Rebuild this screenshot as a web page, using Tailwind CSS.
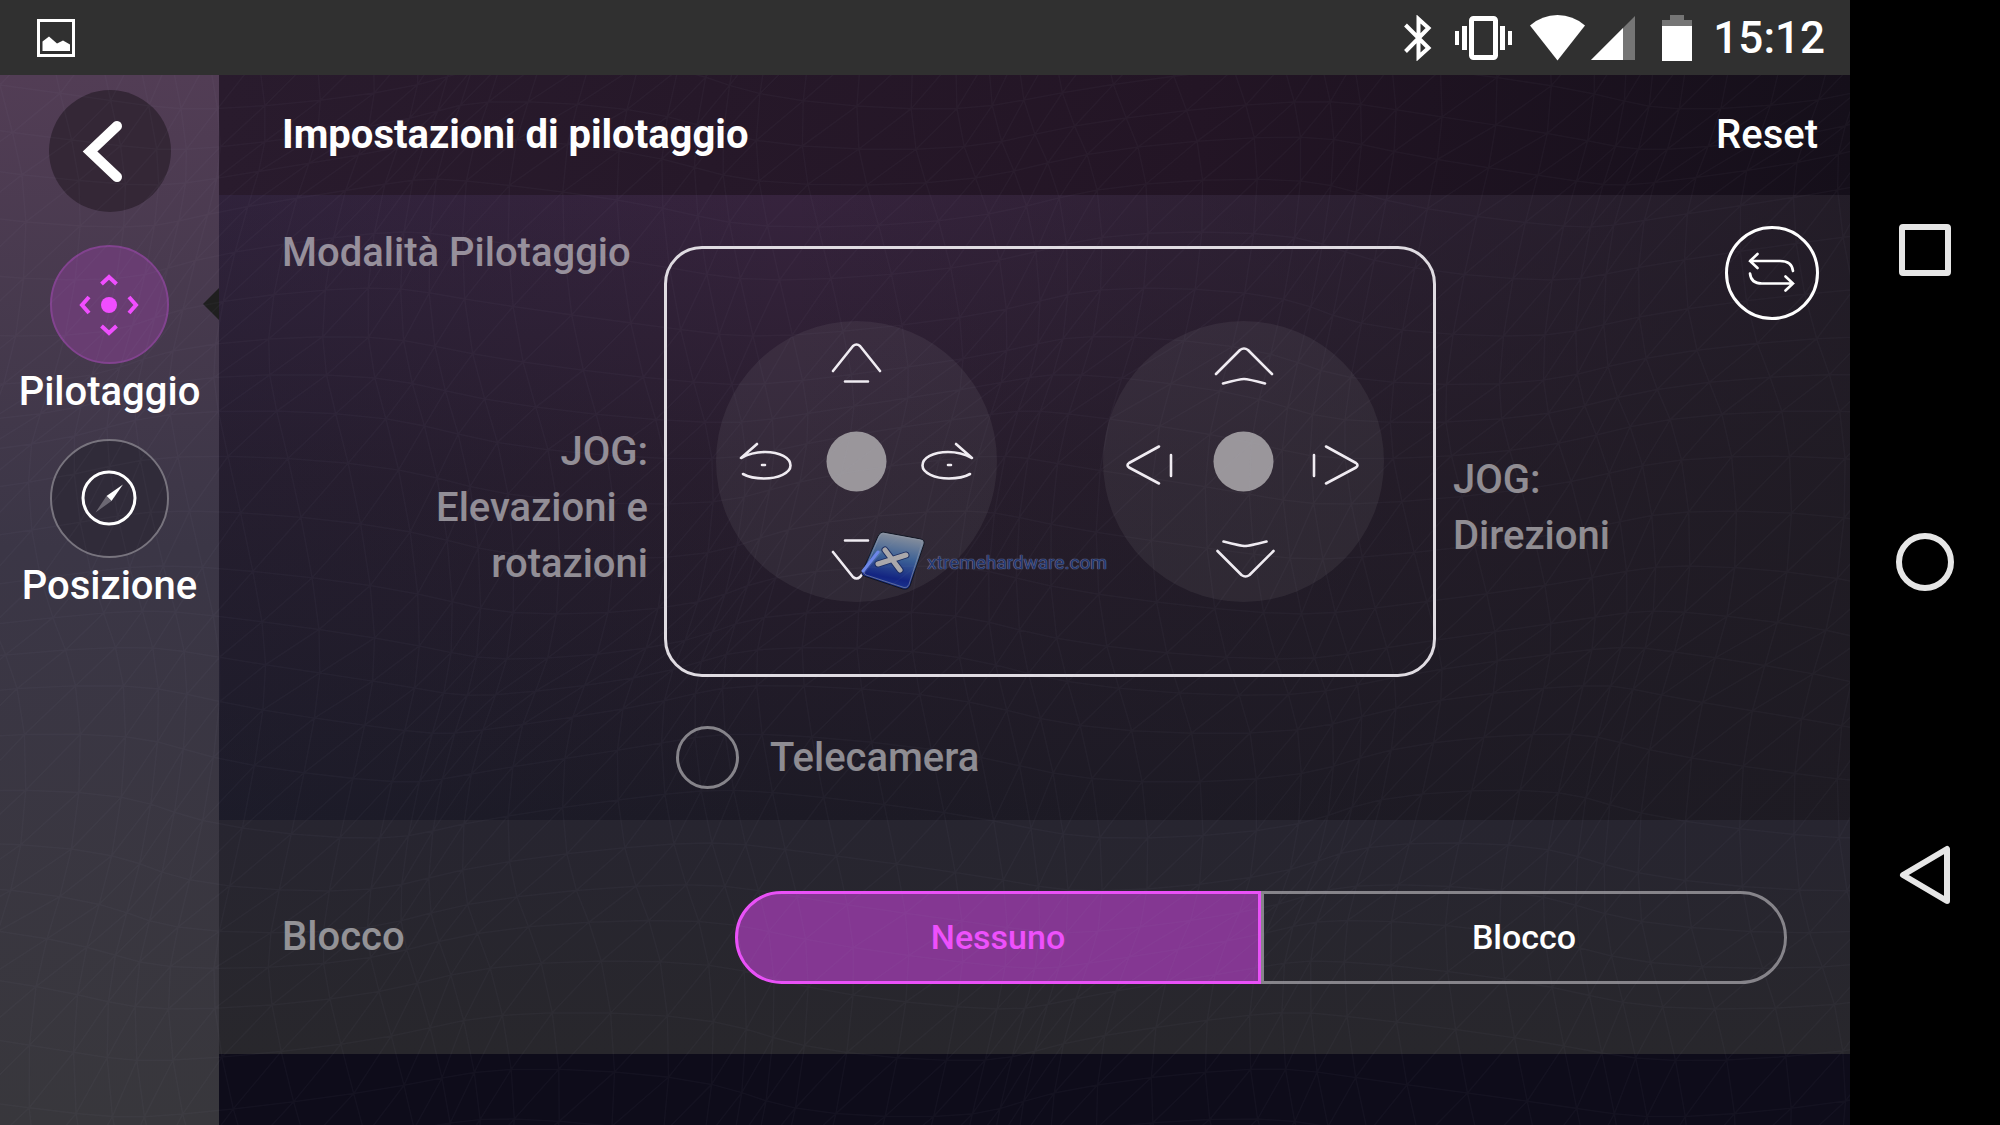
<!DOCTYPE html>
<html lang="it">
  <head>
    <meta charset="UTF-8">
    <meta name="viewport" content="width=device-width, initial-scale=1.0">
    <title>Impostazioni di pilotaggio</title>
    <script src="https://cdn.jsdelivr.net/npm/@tailwindcss/browser@4"></script>
  </head>
  <body class="min-h-screen flex bg-black text-white font-['Roboto',sans-serif] font-medium">
    <div class="flex-1 min-h-screen flex flex-col">
      <!-- Status bar -->
      <header class="h-[75px] shrink-0 bg-[#303030] flex items-center justify-between pl-[37px] pr-[25px]">
        <svg class="size-[38px]" viewBox="0 0 38 38" fill="none">
          <rect x="1.5" y="1.5" width="35" height="35" stroke="#fff" stroke-width="3"/>
          <path d="M5.500 32V22.500l6.500-5 8 7 6-3 7 4V32z" fill="#fff"/>
        </svg>
        <div class="flex items-center">
          <svg class="w-[28px] h-[46px]" viewBox="0 0 28 46" fill="none" stroke="#fff" stroke-width="4">
            <path d="M1.500 10L24.500 33 14.500 42V4l10 9L1.500 36.500"/>
          </svg>
          <svg class="ml-[23px] w-[57px] h-[46px]" viewBox="0 0 57 46" fill="#fff">
            <rect x="16.500" y="3.500" width="24" height="39" rx="2" fill="none" stroke="#fff" stroke-width="5"/>
            <path d="M0 16h4v14H0zM7 11h5v24H7zM45 11h5v24h-5zM53 16h4v14h-4z"/>
          </svg>
          <svg class="ml-[18px] w-[55px] h-[46px]" viewBox="0 0 55 46" fill="#fff">
            <path d="M27.500 45.500L0 10.500Q12 0 27.500 0T55 10.500z"/>
          </svg>
          <svg class="ml-[6px] w-[44px] h-[46px]" viewBox="0 0 44 46">
            <path d="M44 1v44H0z" fill="#757575"/>
            <path d="M32 13v32H0z" fill="#fff"/>
          </svg>
          <svg class="ml-[27px] w-[30px] h-[46px]" viewBox="0 0 30 46">
            <path d="M0 5h8V0h14v5h8v7H0z" fill="#757575"/>
            <path d="M0 11h30v35H0z" fill="#fff"/>
          </svg>
          <time class="ml-[21px] text-[44px] leading-[56px]">15:12</time>
        </div>
      </header>

      <div class="relative flex-1 flex">
        <!-- Sidebar -->
        <nav class="w-[219px] shrink-0 flex flex-col items-center pt-[15px] bg-linear-to-b from-[#523d55] via-[#3b3646] via-45% to-[#38373c]">
          <button type="button" aria-label="Indietro" class="size-[122px] rounded-full bg-[#342736]">
            <svg class="size-full" viewBox="0 0 122 122" fill="none" stroke="#fff" stroke-width="10" stroke-linecap="round">
              <path d="M68 36L41 61.500 68 87"/>
            </svg>
          </button>
          <a href="#pilotaggio" class="relative mt-[33px] w-full flex flex-col items-center text-[40px] leading-[56px]">
            <span class="size-[119px] rounded-full border-2 border-[#82438f] bg-[#683d71]">
              <svg class="size-full" viewBox="2 2 115 115" fill="none" stroke="#f04dff" stroke-width="4">
                <circle cx="59" cy="60" r="8" fill="#f04dff" stroke="none"/>
                <path d="M51.500 39L59 32l7.500 7M51.500 81l7.500 7 7.500-7M39 52l-7 8 7 8M79 52l7 8-7 8"/>
              </svg>
            </span>
            Pilotaggio
            <svg class="absolute right-0 top-[43px] w-[16px] h-[32px]" viewBox="0 0 16 32" fill="#1f1f1f">
              <path d="M16 0v32L0 16z"/>
            </svg>
          </a>
          <a href="#posizione" class="mt-[19px] w-full flex flex-col items-center text-[40px] leading-[56px]">
            <span class="size-[119px] rounded-full border-2 border-[#78747e] bg-[#302b39]">
              <svg class="size-full" viewBox="2 2 115 115" fill="none">
                <circle cx="59" cy="59" r="26" stroke="#fff" stroke-width="3"/>
                <path d="M73 45.500L61.500 62 56.500 57z" fill="#fff"/>
                <path d="M45.500 73.500l11-16.500 5 5z" fill="#6c6873"/>
              </svg>
            </span>
            Posizione
          </a>
        </nav>

        <!-- Settings -->
        <main class="flex-1 flex flex-col bg-[#0e0c1a]">
          <div class="h-[120px] flex items-center justify-between pl-[63px] pr-[32px] bg-linear-to-r from-[#291b2d] via-[#231525] via-60% to-[#150f1a]">
            <h1 class="text-[40px] leading-[56px] font-bold">Impostazioni di pilotaggio</h1>
            <button type="button" class="text-[40px] leading-[56px]">Reset</button>
          </div>

          <section class="h-[625px] bg-linear-to-b from-[#36233d] via-[#281d2d] via-45% to-[#1c1a25]">
            <div class="h-full grid grid-cols-[445px_772px_1fr] bg-linear-to-r from-[#1d2035]/25 from-0% via-transparent via-35% to-[#1e1b22]/80 text-[40px] leading-[56px] text-white/50">
              <div class="grid pl-[63px] pr-[16px] py-[30px]">
                <h2 class="col-start-1 row-start-1 whitespace-nowrap">Modalità Pilotaggio</h2>
                <p class="col-start-1 row-start-1 self-center text-right">JOG:<br>Elevazioni e<br>rotazioni</p>
              </div>

              <div class="pt-[51px]">
                <div class="relative h-[431px] rounded-[38px] border-3 border-[#e0dce2] flex items-center justify-between px-[49px]">
                  <svg class="size-[281px]" viewBox="0 0 281 281" fill="none" stroke="#f0ecf2" stroke-width="2.600" stroke-linecap="round" stroke-linejoin="round">
                    <circle cx="140.500" cy="140.500" r="140.500" fill="#fff" fill-opacity=".06" stroke="none"/>
                    <circle cx="140.500" cy="140.500" r="30" fill="#9a969b" stroke="none"/>
                    <path d="M117 50l20-25q3.500-3 7 0l20 25M129 60.500h23M129 219.500h23M117 231l20 25q3.500 3 7 0l20-25"/>
                    <path d="M41 123L25 137Q36 131 49 131C64 131 74.500 137 74.500 144.500S62 157.500 48 157.500Q35 157.500 27 153"/>
                    <path d="M240 123l16 14Q245 131 232 131C217 131 206.500 137 206.500 144.500S219 157.500 233 157.500Q246 157.500 254 153"/>
                    <path d="M46 144h3M232 144h3"/>
                  </svg>
                  <svg class="size-[281px]" viewBox="0 0 281 281" fill="none" stroke="#f0ecf2" stroke-width="2.600" stroke-linecap="round" stroke-linejoin="round">
                    <circle cx="140.500" cy="140.500" r="140.500" fill="#fff" fill-opacity=".06" stroke="none"/>
                    <circle cx="140.500" cy="140.500" r="30" fill="#9a969b" stroke="none"/>
                    <path d="M113 53l24-24q4-3 8 0l24 24M120 62.500Q137 58 141 58t21 4.500"/>
                    <path d="M114.500 230l24 24q4 3 8 0l24-24M120.500 220.500Q138 225 142 225t21.500-4.500"/>
                    <path d="M56 125.500L26 142q-3 2 0 4.500L56 162.500M68 134v21"/>
                    <path d="M223 125.500L253 142q3 2 0 4.500L223 162.500M211 134v21"/>
                  </svg>
                  <!-- Site badge -->
                  <div class="absolute left-[194px] top-[282px] flex items-center gap-[2px]">
                    <svg class="w-[64px] h-[60px]" viewBox="0 0 64 60">
                      <defs>
                        <linearGradient id="badge" x1=".6" y1="0" x2=".4" y2="1">
                          <stop offset="0" stop-color="#9aa0a8"/>
                          <stop offset=".45" stop-color="#3c66a0"/>
                          <stop offset=".8" stop-color="#10248a"/>
                          <stop offset="1" stop-color="#1a3ba0"/>
                        </linearGradient>
                      </defs>
                      <path d="M22 1q-3 0-5 4L1 41q-1 3 2 4l39 13q5 1 7-3L63 13q1-4-3-5z" fill="url(#badge)" fill-opacity=".9" stroke="#111522"/>
                      <path d="M22 2.500q-2 0-4 4L3 41q0 2 2 3l38 12.500q3 1 5-3L61 13q1-3-2-4z" fill="none" stroke="#8f98a8" stroke-opacity=".6"/>
                      <path d="M24 19L39 39M45 24L17 33" stroke="#1b2c60" stroke-width="7" stroke-linecap="round"/>
                      <path d="M24 19L39 39M45 24L17 33" stroke="#aaa8ab" stroke-width="5" stroke-linecap="round"/>
                      <path d="M2 40L17 21" stroke="#6c86e8" stroke-width="3" stroke-linecap="round"/>
                    </svg>
                    <span class="pt-[4px] text-[19px] leading-[28px] font-normal text-[#22366e] [text-shadow:0_0_1px_#8087a3,0_0_1px_#8087a3]">xtremehardware.com</span>
                  </div>
                </div>
                <label class="mt-[49px] ml-[12px] flex items-center gap-[31px] w-fit">
                  <input type="radio" name="telecamera" class="appearance-none size-[63px] rounded-full border-3 border-[#86848a]">
                  Telecamera
                </label>
              </div>

              <div class="grid pl-[17px] pr-[31px] py-[31px]">
                <p class="col-start-1 row-start-1 self-center">JOG:<br>Direzioni</p>
                <button type="button" aria-label="Inverti" class="col-start-1 row-start-1 justify-self-end self-start size-[94px] rounded-full border-3 border-white">
                  <svg class="size-full" viewBox="3 3 88 88" fill="none" stroke="#fff" stroke-width="2.600" stroke-linecap="round">
                    <path d="M25 35h30q12 0 13 10M32.500 28L25 35l7.500 7M25 47.500q1 10 12 10h31M60.500 50.500l7.500 7-7.500 7"/>
                  </svg>
                </button>
              </div>
            </div>
          </section>

          <section class="h-[234px] flex items-center px-[63px] bg-linear-to-b from-[#272530] to-[#28272c]">
            <h2 class="w-[453px] text-[40px] leading-[56px] text-white/50">Blocco</h2>
            <div class="flex-1 grid grid-cols-2 h-[93px] text-[34px] leading-[48px]">
              <button type="button" aria-pressed="true" class="rounded-l-full border-3 border-[#ea50f8] bg-[#843792] text-[#ee50fc]">Nessuno</button>
              <button type="button" aria-pressed="false" class="rounded-r-full border-3 border-[#86848a]">Blocco</button>
            </div>
          </section>
        </main>

        <!-- Wire mesh over the whole app -->
        <svg class="absolute inset-0 size-full pointer-events-none" viewBox="0 0 1850 1050" preserveAspectRatio="none" fill="none">
          <path id="mesh" stroke="#a8a8c0" stroke-opacity=".04" stroke-width="1.500"/>
        </svg>
      </div>
    </div>

    <!-- Android navigation -->
    <nav class="w-[150px] shrink-0 bg-black flex flex-col items-center py-[94px]">
      <button type="button" aria-label="Recenti" class="flex-1 w-full flex items-center justify-center">
        <svg class="size-[60px]" viewBox="0 0 60 60" fill="none" stroke="#e6e6e6" stroke-width="6">
          <rect x="7" y="7" width="46" height="46" rx="1"/>
        </svg>
      </button>
      <button type="button" aria-label="Home" class="flex-1 w-full flex items-center justify-center">
        <svg class="size-[60px]" viewBox="0 0 60 60" fill="none" stroke="#e6e6e6" stroke-width="6">
          <circle cx="30" cy="30" r="26"/>
        </svg>
      </button>
      <button type="button" aria-label="Indietro" class="flex-1 w-full flex items-center justify-center">
        <svg class="size-[60px]" viewBox="0 0 60 60" fill="none" stroke="#e6e6e6" stroke-width="6" stroke-linejoin="round">
          <path d="M52 4v52L8 30z"/>
        </svg>
      </button>
    </nav>

    <script>
      // Warped triangle grid, one path
      const cols = 46, rows = 24;
      const point = (c, r) => {
        const x = c * 42 + 26 * Math.sin(r * 0.5 + c * 0.22) + 16 * Math.sin(c * 0.9);
        const y = r * 46 + 24 * Math.sin(c * 0.35 + r * 0.3) + 10 * Math.cos(r * 1.1);
        return x.toFixed(1) + ' ' + y.toFixed(1);
      };
      let d = '';
      for (let r = -1; r < rows; r++) {
        for (let c = -1; c < cols; c++) {
          d += `M${point(c, r)}L${point(c + 1, r)}L${point(c, r + 1)}L${point(c, r)}`;
        }
      }
      document.getElementById('mesh').setAttribute('d', d);
    </script>
  </body>
</html>
